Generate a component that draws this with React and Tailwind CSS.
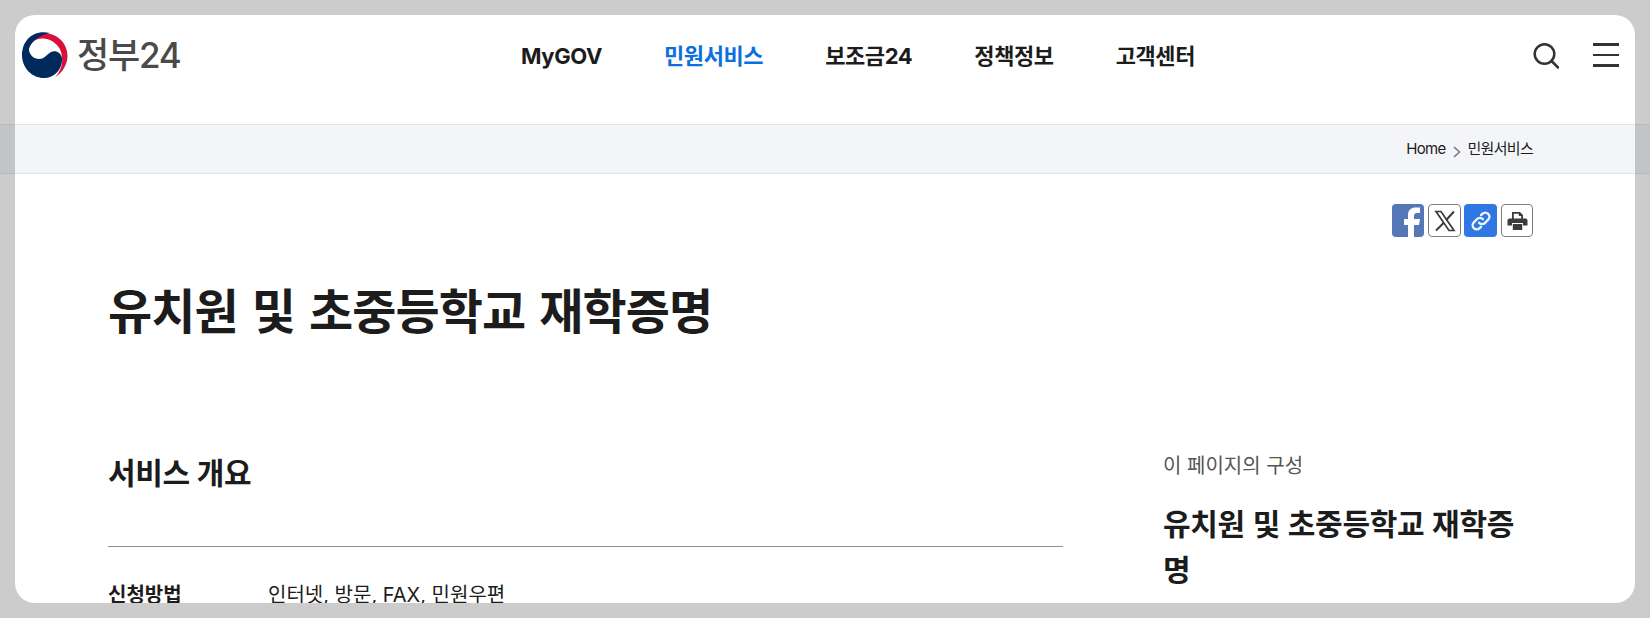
import React from "react";

const font = { fontFamily: 'Inter, "Noto Sans CJK KR", sans-serif' };

function Logo() {
  return (
    <svg width="46" height="46" viewBox="0 0 46 46" className="shrink-0">
      <path d="M7 17 C8 10 14 6.5 20 6.5 C31 6.5 40 15 40 26 C41 34 37 41 33 45.5 C41 40 45.5 32 45.5 24 C45.5 11 35 2 25 1.5 C15 1.5 8 8 7 17 Z" fill="#d9113a" />
      <path d="M28 1 C12 -3 0 8 0 23 C0 36 10 46 22 46 C33 46 41 36 40 26 C39 21 34 18 29 20 C25 22 23 27 17 27 C12 27 7 23 7 17 C9 9 18 3 28 1 Z" fill="#002a5c" />
    </svg>
  );
}

function Navs() {
  const items = ["MyGOV", "민원서비스", "보조금24", "정책정보", "고객센터"];
  return (
    <nav className="absolute left-[506px] top-[26px] flex gap-[62px]">
      {items.map((t, i) => (
        <span
          key={t}
          className={`text-[22px] leading-[30px] font-bold tracking-[-0.4px] ${i === 1 ? "text-[#0b6fde]" : "text-[#1c1c1c]"}`}
        >
          {t}
        </span>
      ))}
    </nav>
  );
}

function Share() {
  return (
    <div className="flex justify-end gap-[3px] pr-[102px] pt-[30px]">
      <span className="w-[32px] h-[33px] rounded-[4px] bg-[#5577b6] overflow-hidden">
        <svg width="32" height="33" viewBox="0 0 32 33">
          <path d="M16 33 V21 H12 V15 H16 V11 C16 6 19 3.5 24 3.5 H28 V9 H25 C23 9 22 10 22 12 V15 H28 L27 21 H22 V33 Z" fill="#fff" />
        </svg>
      </span>
      <span className="ml-[1px] w-[33px] h-[33px] rounded-[4px] border border-[#7f7f7f] bg-white flex items-center justify-center">
        <svg width="24" height="24" viewBox="0 0 24 24" fill="none" stroke="#3b3b3b">
          <path d="M3 2.5 H8 L21 21.5 H16 Z" strokeWidth="1.7" />
          <path d="M21 2.5 L13.2 11 M10.8 13.8 L3 21.5" strokeWidth="2" />
        </svg>
      </span>
      <span className="w-[33px] h-[33px] rounded-[4px] bg-[#2f78e4] flex items-center justify-center">
        <svg width="22" height="22" viewBox="0 0 24 24" fill="none" stroke="#fff" strokeOpacity="0.92" strokeWidth="2.6" strokeLinecap="round">
          <path d="M10 14 a4.4 4.4 0 0 0 6.4 0 l3.4-3.4 a4.5 4.5 0 0 0-6.4-6.4 l-1.4 1.4" />
          <path d="M14 10 a4.4 4.4 0 0 0-6.4 0 l-3.4 3.4 a4.5 4.5 0 0 0 6.4 6.4 l1.4-1.4" />
        </svg>
      </span>
      <span className="ml-[1px] w-[32px] h-[33px] rounded-[4px] border border-[#7f7f7f] bg-white flex items-center justify-center">
        <svg width="21" height="20" viewBox="0 0 21 20">
          <path d="M5 8 V1 H13 L16 4 V8 H14.2 V5 H11.8 V2.8 H6.8 V8 Z" fill="#3b3b3b" />
          <path d="M2.5 7.5 H18.5 A2 2 0 0 1 20.5 9.5 V14.5 H16 V12 H5 V14.5 H0.5 V9.5 A2 2 0 0 1 2.5 7.5 Z" fill="#3b3b3b" />
          <path d="M5.8 13 H15.2 V19 H5.8 Z" fill="#3b3b3b" />
        </svg>
      </span>
    </div>
  );
}

export default function App() {
  return (
    <div className="relative w-[1650px] h-[618px] bg-[#cccccc] overflow-hidden p-[15px]" style={font}>
      <div className="absolute left-0 right-0 top-[124px] h-[50px] bg-[#c3c4c6] border-y border-[#b9b9c2]" />
      <div className="relative w-[1620px] h-[588px] bg-white rounded-[20px] overflow-hidden">
        <header className="relative h-[109px]">
          <div className="absolute left-[7px] top-[17px] flex items-center gap-[9px]">
            <Logo />
            <span className="text-[35px] leading-[46px] font-medium tracking-[-1.2px] text-[#4a4a4a]">정부24</span>
          </div>
          <Navs />
          <svg className="absolute left-[1518px] top-[28px]" width="26" height="26" viewBox="0 0 26 26" fill="none" stroke="#333" strokeWidth="2.5">
            <circle cx="11.5" cy="11" r="9.8" />
            <path d="M18.5 18 L25 24.5" strokeLinecap="round" />
          </svg>
          <div className="absolute left-[1578px] top-[28px] w-[26px] flex flex-col gap-[8px]">
            <span className="block h-[2.5px] bg-[#333]" />
            <span className="block h-[2.5px] bg-[#333]" />
            <span className="block h-[2.5px] bg-[#333]" />
          </div>
        </header>
        <div className="h-[50px] pt-[1px] bg-[#f4f5f9] border-y border-[#e1e3e8] flex items-center justify-end pr-[102px] text-[15px] tracking-[-0.7px] text-[#1c1c1c]">
          <span>Home</span>
          <svg className="ml-[8px] mr-[6px] mt-[4px]" width="8" height="12" viewBox="0 0 8 12" fill="none" stroke="#777" strokeWidth="1.5">
            <path d="M1 1 L6.5 6 L1 11" />
          </svg>
          <span>민원서비스</span>
        </div>
        <Share />
        <h1 className="pl-[93px] mt-[41px] text-[48px] leading-[68px] font-bold tracking-[-0.9px] [word-spacing:3.5px] text-[#1c1c1c]">
          유치원 및 초중등학교 재학증명
        </h1>
        <div className="flex pl-[93px] pt-[106px]">
          <section className="w-[955px]">
            <h2 className="text-[30px] leading-[42px] font-bold tracking-[-0.3px] text-[#1c1c1c]">서비스 개요</h2>
            <div className="mt-[52px] border-t border-[#8f8f8f] pt-[34px] flex text-[20px] leading-[28px]">
              <span className="w-[160px] font-bold text-[#1c1c1c]">신청방법</span>
              <span className="text-[#1c1c1c]">인터넷, 방문, FAX, 민원우편</span>
            </div>
          </section>
          <aside className="ml-[100px] w-[362px]">
            <p className="text-[20px] leading-[28px] text-[#555]">이 페이지의 구성</p>
            <p className="mt-[21px] text-[30px] leading-[46px] font-bold tracking-[-0.3px] [word-spacing:1px] text-[#1c1c1c]">
              유치원 및 초중등학교 재학증명
            </p>
          </aside>
        </div>
      </div>
    </div>
  );
}
